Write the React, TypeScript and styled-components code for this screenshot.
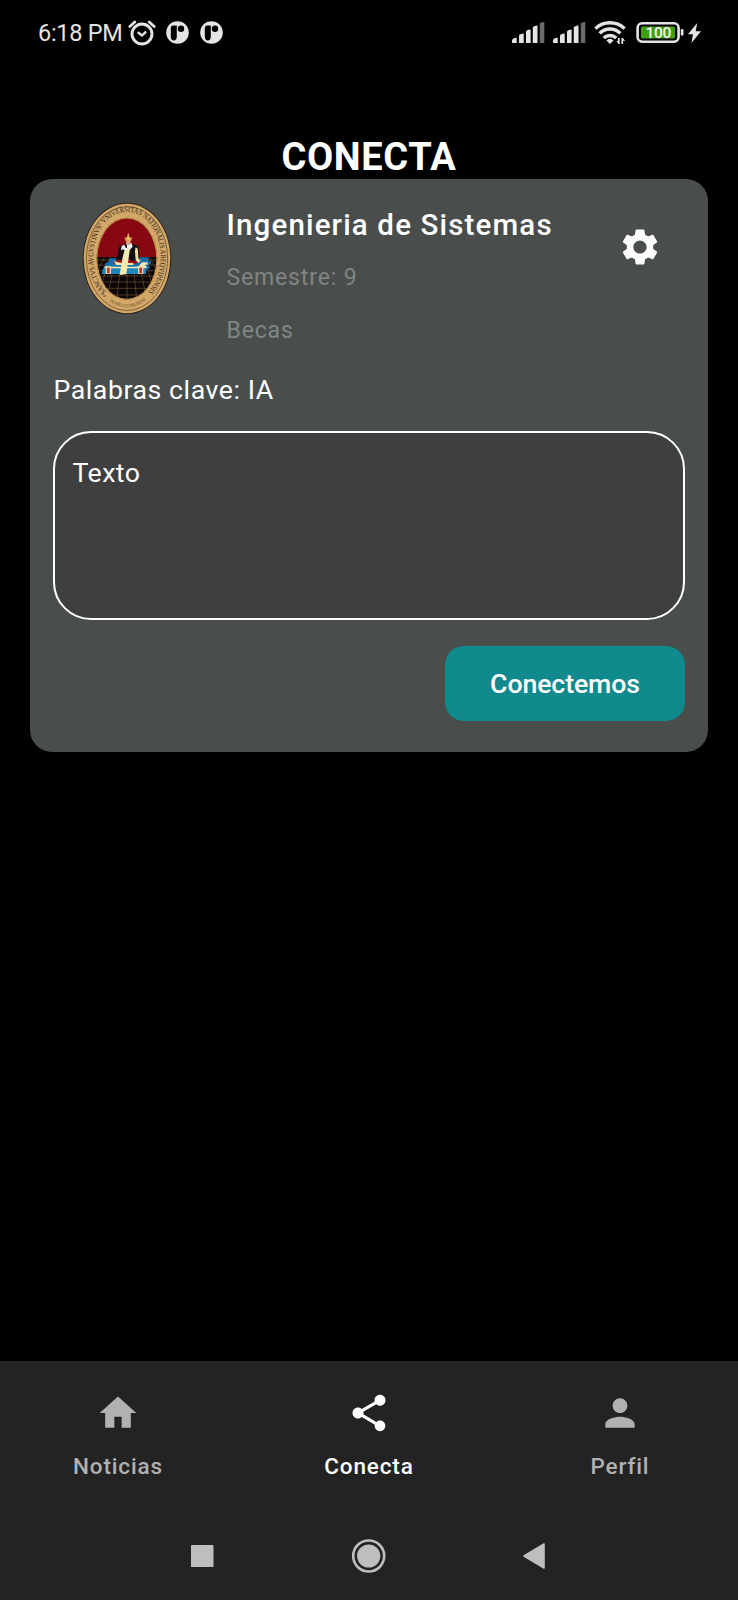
import React from 'react';
import styled, { createGlobalStyle } from 'styled-components';
import { MdHome, MdPerson, MdSettings, MdShare } from 'react-icons/md';

const GlobalStyle = createGlobalStyle`
  * { box-sizing: border-box; }
  body { margin: 0; background: #000; }
  svg { display: block; flex: none; }
`;

const Screen = styled.div`
  width: 738px;
  height: 1600px;
  display: flex;
  flex-direction: column;
  background: #000;
  color: #fff;
  font-family: Roboto, "Liberation Sans", sans-serif;
  overflow: hidden;
`;

const StatusBar = styled.header`
  height: 65px;
  padding: 0 37px 0 38px;
  display: flex;
  align-items: center;
  justify-content: space-between;
  color: #e4e4e4;
`;

const StatusGroup = styled.div`
  display: flex;
  align-items: center;
`;

const Clock = styled.span`
  width: 90px;
  font-size: 23.5px;
  line-height: 66px;
  letter-spacing: -0.3px;
  white-space: nowrap;
`;

const Spacer = styled.div<{ $w: number }>`
  width: ${(p) => p.$w}px;
  flex: none;
`;

const Title = styled.h1`
  margin: 70px 0 0;
  height: 44px;
  line-height: 44px;
  font-size: 38px;
  font-weight: 700;
  letter-spacing: 0.6px;
  text-align: center;
`;

const Card = styled.section`
  width: 678px;
  height: 572.5px;
  margin-left: 30px;
  padding: 20px 23px 30px 23px;
  display: flex;
  flex-direction: column;
  border-radius: 22px;
  background: #494e4d;
`;

const CardHeader = styled.div`
  height: 156px;
  display: flex;
  padding-left: 29px;
`;

const SealSlot = styled.div`
  width: 144.5px;
  padding-top: 3px;
`;

const Info = styled.div`
  flex: 1;
`;

const Career = styled.h2`
  margin: 0 0 1px;
  font-size: 29.5px;
  font-weight: 500;
  line-height: 52px;
  letter-spacing: 1.15px;
  white-space: nowrap;
`;

const Detail = styled.p`
  margin: 0;
  font-size: 23px;
  line-height: 52.5px;
  letter-spacing: 0.85px;
  color: #828484;
`;

const SettingsButton = styled.button`
  width: 44px;
  height: 44px;
  margin: 26px 23px 0 0;
  padding: 0;
  border: 0;
  background: none;
  color: #fff;
`;

const Keywords = styled.p`
  margin: 0 0 6px;
  height: 70px;
  padding-left: 0.5px;
  line-height: 70px;
  font-size: 26.7px;
  letter-spacing: 0.55px;
`;

const MessageBox = styled.div`
  height: 189px;
  padding: 20px 17.5px;
  border: 2px solid #fff;
  border-radius: 38px;
  background: #3f3f3f;
  font-size: 26.7px;
  line-height: 40px;
  letter-spacing: 0.45px;
`;

const ConnectButton = styled.button`
  align-self: flex-end;
  width: 240px;
  height: 75px;
  margin-top: 26px;
  padding: 2px 0 0;
  border: 0;
  border-radius: 19px;
  background: #108a8c;
  color: #fff;
  font: 500 26.7px/73px Roboto, "Liberation Sans", sans-serif;
  letter-spacing: -0.12px;
`;

const BottomArea = styled.footer`
  height: 239px;
  margin-top: auto;
  background: #232323;
`;

const Tabs = styled.nav`
  height: 151px;
  padding: 30px 0 0;
  display: flex;
  justify-content: space-between;
`;

const Tab = styled.div<{ $active?: boolean }>`
  width: 236px;
  display: flex;
  flex-direction: column;
  align-items: center;
  color: ${(p) => (p.$active ? '#fff' : '#b1b1b1')};
`;

const TabLabel = styled.span`
  margin-top: 11px;
  line-height: 40px;
  font-size: 22.5px;
  font-weight: 500;
  letter-spacing: 0.85px;
`;

const SystemBar = styled.div`
  height: 88px;
  padding: 0 193.5px 0 191px;
  display: grid;
  grid-template-columns: 22.5px 1fr 22px;
  justify-items: center;
  align-items: center;
  color: #bebebe;
`;

const AlarmIcon = () => (
  <svg width="28" height="26" viewBox="0 0 28 26" fill="none" stroke="currentColor" strokeLinecap="round">
    <circle cx="14" cy="14" r="10" strokeWidth="2.9" />
    <path d="M1.8 6.6 6.8 2M26.2 6.6 21.2 2" strokeWidth="2.7" />
    <path d="M10.5 12.8 14 15.5 17.5 12.2" strokeWidth="2.4" />
  </svg>
);

const BadgeIcon = () => (
  <svg width="23" height="23" viewBox="0 0 23 23">
    <circle cx="11.5" cy="11.5" r="11.3" fill="currentColor" />
    <path d="M7.2 4.6h3.6v10.8c0 2.6-1.2 4-3 4s-3-1.4-3-4V7c0-1.4.8-2.4 2.4-2.4z" fill="#000" />
    <circle cx="15" cy="7.7" r="3.2" fill="#000" />
  </svg>
);

const SignalIcon = () => (
  <svg width="33" height="21" viewBox="0 0 33 21" fill="currentColor">
    <path d="M0 21v-2.5Q.5 16 4.7 15.8V21z" />
    <path d="M7 21v-7.5Q7.5 12 11.7 11.6V21z" />
    <path d="M14 21V9.5Q14.5 8 18.6 7.6V21z" />
    <path d="M20.8 21V5.4Q21.4 4 25.5 3.6V21z" />
    <path d="M27.8 21V1.6Q28.3.3 32.3 0V21z" fill="#6a6a6a" />
  </svg>
);

const WifiIcon = () => (
  <svg width="33" height="25" viewBox="0 0 33 25" fill="none" stroke="currentColor" strokeWidth="3.4">
    <path d="M1.4 8.6a21 21 0 0 1 29.2 0" />
    <path d="M5.6 13.4a14.6 14.6 0 0 1 20.8 0" />
    <path d="M9.8 18a8.8 8.8 0 0 1 12.4 0" />
    <path d="M12.5 20.4a4.7 4.7 0 0 1 7 0L16 24z" fill="currentColor" stroke="none" />
    <path d="M24.8 24v-6M28.3 18v6" strokeWidth="1.7" />
    <path d="M22.2 21h2.8v3zM31.2 20.8h-2.8v-3z" fill="currentColor" stroke="none" />
  </svg>
);

const BatteryIcon = () => (
  <svg width="48" height="21" viewBox="0 0 48 21">
    <rect x="1.6" y="1.3" width="41" height="18.4" rx="4.6" fill="none" stroke="currentColor" strokeWidth="2.6" />
    <rect x="5" y="4.4" width="34" height="12.2" rx="1.6" fill="#40a012" />
    <rect x="44.8" y="7" width="2.7" height="6.6" rx="1.2" fill="currentColor" />
    <text x="22.4" y="16" fill="#f2f6ee" fontSize="15.5" fontWeight="500" textAnchor="middle" textLength="26">100</text>
  </svg>
);

const BoltIcon = () => (
  <svg width="13" height="20" viewBox="0 0 13 20" fill="currentColor">
    <path d="M9.2 0 0 11.3h5L3.4 20 13 8.2H7.7z" />
  </svg>
);

const UniversitySeal = () => (
  <svg width="90" height="113" viewBox="23 20 270 339">
    <defs>
      <clipPath id="sealCore">
        <ellipse cx="157.500" cy="190" rx="89" ry="121" />
      </clipPath>
      <path id="sealArc" d="M101 296A101 135 0 1 1 215 296" />
      <path id="sealMotto" d="M98 311Q157 362 217 311" />
    </defs>
    <ellipse cx="158" cy="189.500" rx="133" ry="167" fill="#2b211a" />
    <ellipse cx="158" cy="189.500" rx="130" ry="164" fill="#d2a768" />
    <ellipse cx="158" cy="189.500" rx="122" ry="156" fill="none" stroke="#6b5230" strokeWidth="2.500" />
    <ellipse cx="157.500" cy="190" rx="91" ry="123" fill="#51321c" />
    <g clipPath="url(#sealCore)">
      <rect x="60" y="60" width="200" height="126" fill="#870810" />
      <rect x="60" y="185" width="200" height="135" fill="#0c0606" />
      <g stroke="#806440" strokeWidth="1.600" fill="none">
        <path d="M60 194H260M60 209H260M60 226H260M60 242H260M60 260H260M60 279H260M60 299H260" />
        <path d="M91 185 45 270M108 185 65 320M124 185 96 320M141 185 127 320M158 185V320M174 185 188 320M191 185 219 320M208 185 251 320M225 185 272 270" />
      </g>
      <g transform="translate(69 93)">
        <path d="M36 96h20v12H34zM122 93h32v12h7v9h-8l5 12-18 8H15l10-24 18-8h75z" fill="#176ca4" />
        <path d="M24 119h100l10-11h17v7h-9l8 9-14 4H20z" fill="#f0e7b0" />
        <path d="M18 126h128v17H13z" fill="#2088b8" />
        <path d="M34 114h77l10 7H28z" fill="#1978ad" />
        <path d="M46 110l15-10 10-9h36l15 18-13 5H59z" fill="#91101a" />
        <path d="M49 105l24 5h35v6H57z" fill="#f0e7b0" />
        <path d="M25 120h16v23H25zM122 120h16v23h-16z" fill="#e9d6a6" />
        <path d="M29 124h8v17h-8zM126 124h8v17h-8z" fill="#b23a2c" />
        <path d="M66 61q14-8 28-7 20-2 30 7l2 38-22 5-9-7-28 4-8-4z" fill="#110e14" />
        <path d="M83 66l15 1-4 28-7 49-20 2 8-49z" fill="#f5eab0" />
        <path d="M114 64q7-2 8 10l1 22 7 7-7 7-8-9-2-24z" fill="#efe0a5" />
        <path d="M73 59l8-4 4 9 7 2-6 9-8-6-7 3zM88 51h15l3 10-8 9-9-5z" fill="#eef0ee" />
        <circle cx="93" cy="49" r="7" fill="#d8a084" />
        <path d="M85 45 81 32l6 2 5-11 6 11 7-2-4 13z" fill="#d99a4c" />
        <path d="M93 21v20M87 38h12" stroke="#f0cf80" strokeWidth="2.500" />
      </g>
    </g>
    <ellipse cx="157.500" cy="190" rx="90" ry="122" fill="none" stroke="#c59350" strokeWidth="3" />
    <text fill="#302316" fontFamily='"Liberation Serif", serif' fontSize="23">
      <textPath href="#sealArc" textLength="610" lengthAdjust="spacingAndGlyphs">
        °SANCTVS AVGVSTINVS° VNIVERSITAS NATIONALIS AREQVIPENSIS
      </textPath>
    </text>
    <text fill="#5a4023" fontFamily='"Liberation Serif", serif' fontSize="14">
      <textPath href="#sealMotto" startOffset="10" textLength="118" lengthAdjust="spacingAndGlyphs">
        DUABUS ET PRUDENS
      </textPath>
    </text>
  </svg>
);

const RecentsIcon = () => (
  <svg width="22.5" height="22.5" viewBox="0 0 22.5 22.5">
    <rect width="22.5" height="22.5" rx="1" fill="currentColor" />
  </svg>
);

const HomeCircleIcon = () => (
  <svg width="36" height="36" viewBox="0 0 36 36">
    <circle cx="18.7" cy="18" r="15.5" fill="none" stroke="currentColor" strokeWidth="2.6" />
    <circle cx="18.7" cy="18" r="11.6" fill="currentColor" />
  </svg>
);

const BackIcon = () => (
  <svg width="22" height="26" viewBox="0 0 22 26">
    <path d="M1 13 21 1V25z" fill="currentColor" stroke="currentColor" strokeWidth="1.6" strokeLinejoin="round" />
  </svg>
);

export default function App() {
  return (
    <Screen>
      <GlobalStyle />
      <StatusBar>
        <StatusGroup>
          <Clock>6:18 PM</Clock>
          <AlarmIcon />
          <Spacer $w={9.5} />
          <BadgeIcon />
          <Spacer $w={11} />
          <BadgeIcon />
        </StatusGroup>
        <StatusGroup>
          <SignalIcon />
          <Spacer $w={8} />
          <SignalIcon />
          <Spacer $w={8} />
          <WifiIcon />
          <Spacer $w={9} />
          <BatteryIcon />
          <Spacer $w={4.5} />
          <BoltIcon />
        </StatusGroup>
      </StatusBar>

      <Title>CONECTA</Title>

      <Card>
        <CardHeader>
          <SealSlot>
            <UniversitySeal />
          </SealSlot>
          <Info>
            <Career>Ingenieria de Sistemas</Career>
            <Detail>Semestre: 9</Detail>
            <Detail>Becas</Detail>
          </Info>
          <SettingsButton aria-label="Ajustes">
            <MdSettings size={44} />
          </SettingsButton>
        </CardHeader>
        <Keywords>Palabras clave: IA</Keywords>
        <MessageBox>Texto</MessageBox>
        <ConnectButton>Conectemos</ConnectButton>
      </Card>

      <BottomArea>
        <Tabs>
          <Tab>
            <MdHome size={44} />
            <TabLabel>Noticias</TabLabel>
          </Tab>
          <Tab $active>
            <MdShare size={44} />
            <TabLabel>Conecta</TabLabel>
          </Tab>
          <Tab>
            <MdPerson size={44} />
            <TabLabel>Perfil</TabLabel>
          </Tab>
        </Tabs>
        <SystemBar>
          <RecentsIcon />
          <HomeCircleIcon />
          <BackIcon />
        </SystemBar>
      </BottomArea>
    </Screen>
  );
}
